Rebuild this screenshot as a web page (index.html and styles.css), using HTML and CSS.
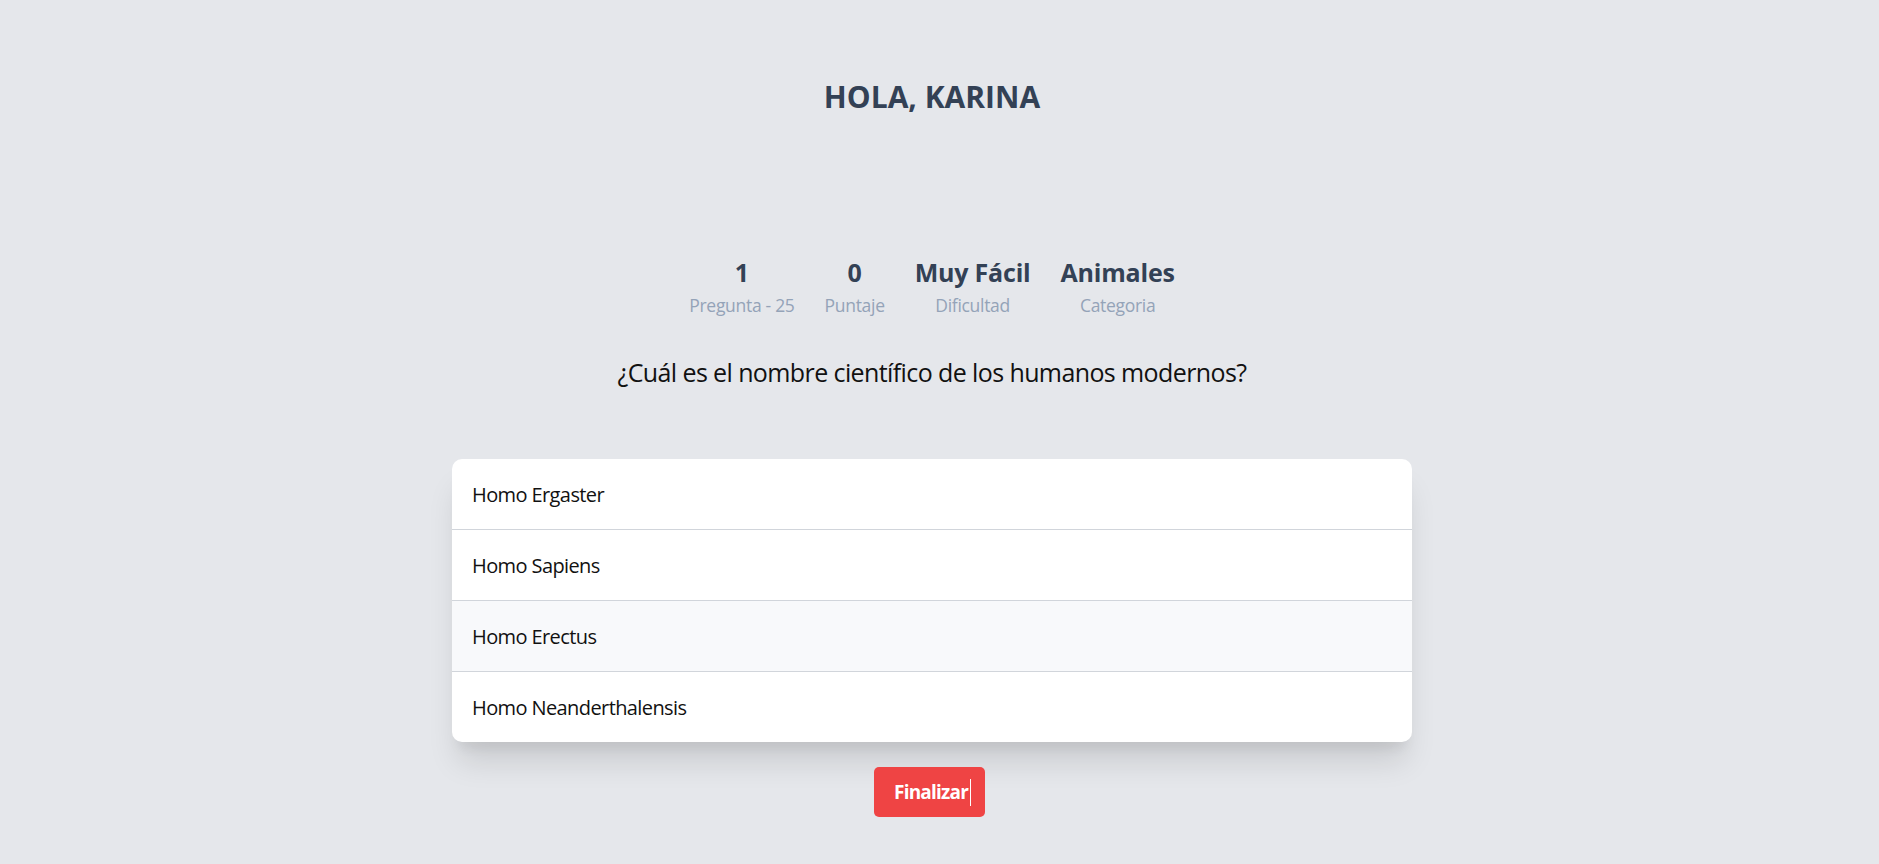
FILE: index.html
```html
<!DOCTYPE html>
<html lang="es">
<head>
<meta charset="utf-8">
<title>Quiz</title>
<link rel="stylesheet" href="styles.css">
</head>
<body>
<div class="page">
  <header class="header">
    <h1 class="greeting">HOLA, KARINA</h1>
  </header>
  <main class="quiz">
    <div class="stats">
      <div class="stat">
        <div class="stat-value">1</div>
        <div class="stat-label">Pregunta - 25</div>
      </div>
      <div class="stat">
        <div class="stat-value">0</div>
        <div class="stat-label">Puntaje</div>
      </div>
      <div class="stat">
        <div class="stat-value">Muy Fácil</div>
        <div class="stat-label">Dificultad</div>
      </div>
      <div class="stat">
        <div class="stat-value">Animales</div>
        <div class="stat-label">Categoria</div>
      </div>
    </div>
    <p class="question">¿Cuál es el nombre científico de los humanos modernos?</p>
    <ul class="options">
      <li class="option">Homo Ergaster</li>
      <li class="option">Homo Sapiens</li>
      <li class="option option-hover">Homo Erectus</li>
      <li class="option">Homo Neanderthalensis</li>
    </ul>
    <button class="finish" type="button"><span class="finish-text">Finalizar</span></button>
  </main>
</div>
</body>
</html>
```

FILE: styles.css
```css
html, body {
  margin: 0;
  padding: 0;
  background: #e5e7eb;
}

body {
  font-family: "Segoe UI", "Open Sans", "Noto Sans", sans-serif;
  color: #111827;
}

.page {
  box-sizing: border-box;
  width: 100%;
  padding-right: 15px;
  min-height: 864px;
  display: flex;
  flex-direction: column;
  align-items: center;
}

.header {
  padding-top: 77px;
  display: flex;
  justify-content: center;
}

.greeting {
  margin: 0;
  font-size: 30px;
  line-height: 40px;
  font-weight: 700;
  color: #334155;
}

.quiz {
  margin-top: 138px;
  width: 960px;
  display: flex;
  flex-direction: column;
  align-items: center;
}

.stats {
  display: flex;
  justify-content: center;
}

.stat {
  padding: 0 15px;
  text-align: center;
}

.stat-value {
  font-size: 25px;
  line-height: 35px;
  font-weight: 700;
  color: #334155;
  letter-spacing: -0.2px;
}

.stat-label {
  margin-top: 3px;
  font-size: 17.5px;
  line-height: 25px;
  color: #94a3b8;
  letter-spacing: -0.3px;
}

.question {
  margin: 37px 0 0;
  font-size: 25px;
  line-height: 35px;
  color: #111111;
  letter-spacing: -0.6px;
}

.options {
  list-style: none;
  margin: 69px 0 0;
  padding: 0;
  width: 960px;
  background: #ffffff;
  border-radius: 10px;
  overflow: hidden;
  box-shadow: 0 25px 31px -6px rgba(0, 0, 0, 0.12), 0 12px 12px -6px rgba(0, 0, 0, 0.06);
}

.option {
  padding: 21px 20px 19px;
  font-size: 20px;
  line-height: 30px;
  color: #111111;
  letter-spacing: -0.6px;
  border-top: 1px solid #d1d5db;
}

.option:first-child {
  border-top: none;
}

.option-hover {
  background: #f8f9fb;
}

.finish {
  margin-top: 25px;
  margin-right: 5px;
  padding: 10px 14px 10px 20px;
  border: none;
  border-radius: 5px;
  background: #ef4444;
  color: #ffffff;
  font-family: inherit;
  font-size: 19px;
  line-height: 30px;
  font-weight: 700;
  letter-spacing: -0.8px;
}

.finish-text {
  display: inline-flex;
  align-items: center;
}

.finish-text::after {
  content: "";
  display: inline-block;
  width: 1px;
  height: 27px;
  margin-left: 2px;
  background: #ffffff;
}
```
